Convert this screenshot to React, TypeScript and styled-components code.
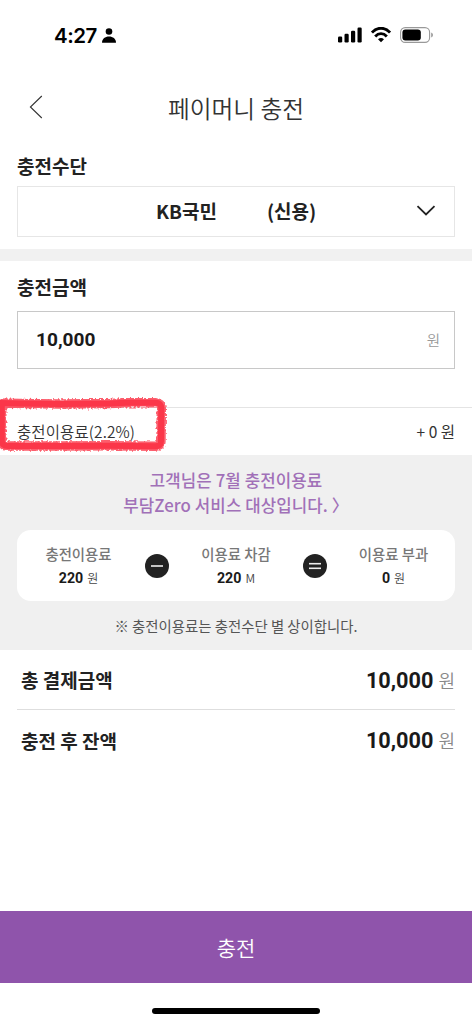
import React from 'react';
import styled, { createGlobalStyle } from 'styled-components';

const KR = "'Noto Sans CJK KR', sans-serif";
const NUM = "Roboto, 'Noto Sans CJK KR', sans-serif";

const Global = createGlobalStyle`
  * { box-sizing: border-box; }
  body { margin: 0; background: #fff; font-family: ${KR}; color: #222; }
`;

const Screen = styled.main`
  position: relative;
  display: flex;
  flex-direction: column;
  width: 472px;
  height: 1024px;
  overflow: hidden;
  background: #fff;
`;

const StatusBar = styled.div`
  display: flex;
  align-items: center;
  justify-content: space-between;
  height: 70px;
  padding: 0 39px 0 54px;
`;

const Clock = styled.div`
  display: flex;
  align-items: center;
  gap: 5px;
  padding-top: 1px;
  font: 600 20.5px/24px Inter, sans-serif;
  letter-spacing: -0.5px;
  color: #000;
`;

const StatusIcons = styled.div`
  display: flex;
  align-items: center;
  gap: 9px;
`;

const Header = styled.header`
  display: grid;
  grid-template-columns: 44px 1fr 44px;
  align-items: center;
  height: 74px;
  padding: 0 14px;
`;

const BackButton = styled.button`
  display: flex;
  width: 44px;
  height: 44px;
  align-items: center;
  justify-content: center;
  padding: 0;
  border: 0;
  background: none;
`;

const Title = styled.h1`
  margin: 0;
  padding-top: 1px;
  font-size: 23.7px;
  font-weight: 350;
  line-height: 36px;
  text-align: center;
  white-space: nowrap;
  color: #333;
`;

const Section = styled.section<{ $height: number; $top: number }>`
  height: ${(p) => p.$height}px;
  padding: ${(p) => p.$top}px 17px 0;
`;

const SectionTitle = styled.h2<{ $gap: number }>`
  margin: 0 0 ${(p) => p.$gap}px;
  font-size: 19px;
  font-weight: 700;
  line-height: 28px;
`;

const MethodSelect = styled.div`
  display: grid;
  grid-template-columns: 1fr 20px;
  align-items: center;
  height: 51px;
  padding: 0 18px 2px 138px;
  border: 1px solid #e6e6e6;
  font-size: 19px;
  font-weight: 700;
  line-height: 28px;
`;

const MethodName = styled.div`
  display: flex;
  gap: 50px;
`;

const Divider = styled.div`
  height: 12px;
  background: #f1f1f1;
`;

const AmountField = styled.div`
  display: flex;
  align-items: center;
  justify-content: space-between;
  height: 58px;
  padding: 0 14px 1px 18px;
  border: 1px solid #c8c8c8;
`;

const Amount = styled.span<{ $size: number }>`
  font-family: ${NUM};
  font-size: ${(p) => p.$size}px;
  font-weight: 700;
  color: #1a1a1a;
`;

const Unit = styled.span<{ $size: number; $color: string }>`
  font-size: ${(p) => p.$size}px;
  font-weight: 350;
  color: ${(p) => p.$color};
`;

const FeeRow = styled.div`
  display: flex;
  align-items: center;
  justify-content: space-between;
  height: 48px;
  padding: 0 17px 2px;
  border-top: 1px solid #e4e4e4;
  font-size: 15.5px;
  font-weight: 400;
  line-height: 24px;
  color: #333;
`;

const FeeLabel = styled.span`
  font-weight: 350;
  letter-spacing: 0.1px;
`;

const FeePanel = styled.section`
  height: 195px;
  padding: 13px 17px 0;
  background: #f0f0f0;
`;

const Benefit = styled.p`
  margin: 0 0 12px;
  font-size: 16.8px;
  font-weight: 500;
  line-height: 25px;
  text-align: center;
  color: #a170b8;
`;

const BenefitLine = styled.span`
  display: block;
  letter-spacing: 0.08px;
`;

const Breakdown = styled.div`
  display: grid;
  grid-template-columns: 123px 34px 124px 34px 123px;
  align-items: center;
  justify-items: center;
  height: 71px;
  border-radius: 14px;
  background: #fff;
`;

const Part = styled.div`
  display: flex;
  flex-direction: column;
  align-items: center;
  white-space: nowrap;
`;

const PartLabel = styled.span`
  font-size: 14.4px;
  font-weight: 500;
  line-height: 24px;
  color: #777;
`;

const PartValue = styled.span`
  display: flex;
  align-items: baseline;
  gap: 4px;
  line-height: 24px;
`;

const PartUnit = styled.span`
  font-size: 12px;
  font-weight: 350;
  color: #444;
`;

const Note = styled.p`
  margin: 14px 0 0;
  font-size: 14.4px;
  font-weight: 400;
  line-height: 22px;
  text-align: center;
  color: #555;
`;

const Totals = styled.section`
  flex: 1;
  padding: 0 17px;
`;

const TotalRow = styled.div`
  display: flex;
  align-items: center;
  justify-content: space-between;
  height: 59px;
  padding-left: 4px;
  font-size: 19px;
  font-weight: 700;
  & + & {
    height: 61px;
    border-top: 1px solid #dedede;
  }
`;

const TotalValue = styled.span`
  display: flex;
  align-items: baseline;
  gap: 5px;
`;

const ChargeButton = styled.button`
  height: 72px;
  border: 0;
  padding: 0;
  background: #8f54ab;
  color: #fff;
  font-family: ${KR};
  font-size: 21px;
  font-weight: 350;
`;

const HomeArea = styled.div`
  display: flex;
  justify-content: center;
  height: 41px;
  padding-top: 25px;
`;

const HomeIndicator = styled.div`
  width: 168px;
  height: 6px;
  border-radius: 3px;
  background: #000;
`;

const Scribble = styled.svg`
  position: absolute;
  left: 0;
  top: 390px;
  pointer-events: none;
`;

const OperatorIcon = ({ lines }: { lines: number[] }) => (
  <svg width="24" height="24" viewBox="0 0 24 24">
    <circle cx="12" cy="12" r="12" fill="#222" />
    {lines.map((y) => (
      <path key={y} d={`M6 ${y}h12`} stroke="#eee" strokeWidth="1.6" />
    ))}
  </svg>
);

const FeePart = ({ label, value, unit }: { label: string; value: string; unit: string }) => (
  <Part>
    <PartLabel>{label}</PartLabel>
    <PartValue>
      <Amount $size={14.2}>{value}</Amount>
      <PartUnit>{unit}</PartUnit>
    </PartValue>
  </Part>
);

const totals = [
  { label: '총 결제금액', value: '10,000' },
  { label: '충전 후 잔액', value: '10,000' },
];

const crayonPath =
  'M-6 13 20 13.5 60 14 110 13.5 126 12.8 155 12.8Q161.500 12.500 161.300 19L161 51Q161 56.500 155 56.300L110 55.800 60 56 8 56Q1.500 56 1.800 50L1.800 14';

export default function App() {
  return (
    <Screen>
      <Global />
      <StatusBar>
        <Clock>
          4:27
          <svg width="14" height="15" viewBox="0 0 14 15">
            <circle cx="7" cy="3.5" r="3.3" />
            <path d="M0 14.2C.2 10.7 3 8.4 7 8.4s6.8 2.3 7 5.8q0 .5-.6.5H.6q-.6 0-.6-.5z" />
          </svg>
        </Clock>
        <StatusIcons>
          <svg width="24" height="16" viewBox="0 0 24 16">
            <rect x="0" y="9.6" width="4.2" height="5.8" rx="1.2" />
            <rect x="6.5" y="6.8" width="4.2" height="8.6" rx="1.2" />
            <rect x="13" y="3.8" width="4.2" height="11.6" rx="1.2" />
            <rect x="19.5" y="0.5" width="4.2" height="14.9" rx="1.2" />
          </svg>
          <svg width="20" height="16" viewBox="0 0 20 16" fill="none" stroke="#000" strokeWidth="2.9">
            <path d="M.9 5.6C6-.2 14-.2 19.1 5.6" />
            <path d="M4.2 9.4c3.4-3.7 8.2-3.7 11.6 0" />
            <path d="M7 12.2q3-2.5 6 0l-3 3z" fill="#000" stroke="none" />
          </svg>
          <svg width="33" height="16" viewBox="0 0 33 16">
            <rect x="0.6" y="0.6" width="29" height="14.8" rx="4.6" fill="none" stroke="#999" strokeWidth="1.1" />
            <rect x="2.4" y="2.4" width="18.4" height="11.2" rx="3" />
            <path d="M31.2 5.6q1.8.6 1.8 2.4t-1.8 2.4z" fill="#999" />
          </svg>
        </StatusIcons>
      </StatusBar>

      <Header>
        <BackButton aria-label="뒤로">
          <svg width="14" height="24" viewBox="0 0 14 24" fill="none" stroke="#333" strokeWidth="1.1">
            <path d="M12.8 1 1.4 12l11.4 11" />
          </svg>
        </BackButton>
        <Title>페이머니 충전</Title>
      </Header>

      <Section $height={105} $top={8}>
        <SectionTitle $gap={6}>충전수단</SectionTitle>
        <MethodSelect>
          <MethodName>
            <span>KB국민</span>
            <span>(신용)</span>
          </MethodName>
          <svg width="20" height="12" viewBox="0 0 20 12" fill="none" stroke="#222" strokeWidth="1.8">
            <path d="m1.5 1.2 8.5 8.3 8.5-8.3" />
          </svg>
        </MethodSelect>
      </Section>
      <Divider />
      <Section $height={146} $top={12}>
        <SectionTitle $gap={10}>충전금액</SectionTitle>
        <AmountField>
          <Amount $size={19.1}>10,000</Amount>
          <Unit $size={14.5} $color="#999">원</Unit>
        </AmountField>
      </Section>

      <FeeRow>
        <FeeLabel>충전이용료(2.2%)</FeeLabel>
        <span>+ 0 원</span>
      </FeeRow>
      <FeePanel>
        <Benefit>
          <BenefitLine>고객님은 7월 충전이용료</BenefitLine>
          <BenefitLine>부담Zero 서비스 대상입니다. 〉</BenefitLine>
        </Benefit>
        <Breakdown>
          <FeePart label="충전이용료" value="220" unit="원" />
          <OperatorIcon lines={[12]} />
          <FeePart label="이용료 차감" value="220" unit="M" />
          <OperatorIcon lines={[9.7, 14.3]} />
          <FeePart label="이용료 부과" value="0" unit="원" />
        </Breakdown>
        <Note>※ 충전이용료는 충전수단 별 상이합니다.</Note>
      </FeePanel>

      <Totals>
        {totals.map((t) => (
          <TotalRow key={t.label}>
            <span>{t.label}</span>
            <TotalValue>
              <Amount $size={21.7}>{t.value}</Amount>
              <Unit $size={18} $color="#888">원</Unit>
            </TotalValue>
          </TotalRow>
        ))}
      </Totals>

      <ChargeButton>충전</ChargeButton>
      <HomeArea>
        <HomeIndicator />
      </HomeArea>

      <Scribble width="176" height="70" viewBox="0 0 176 70" fill="none" stroke="#fb3649" strokeLinejoin="round">
        <defs>
          <filter
            id="crayon"
            filterUnits="userSpaceOnUse"
            x="-20"
            y="0"
            width="200"
            height="70"
            colorInterpolationFilters="sRGB"
          >
            <feTurbulence type="fractalNoise" baseFrequency="0.5" numOctaves="2" seed="7" />
            <feDisplacementMap in="SourceGraphic" scale="5" xChannelSelector="R" yChannelSelector="G" />
            <feGaussianBlur stdDeviation="0.45" />
          </filter>
        </defs>
        <path d={crayonPath} strokeWidth="9.4" strokeOpacity="0.8" filter="url(#crayon)" />
        <path d={crayonPath} strokeWidth="6" />
      </Scribble>
    </Screen>
  );
}
